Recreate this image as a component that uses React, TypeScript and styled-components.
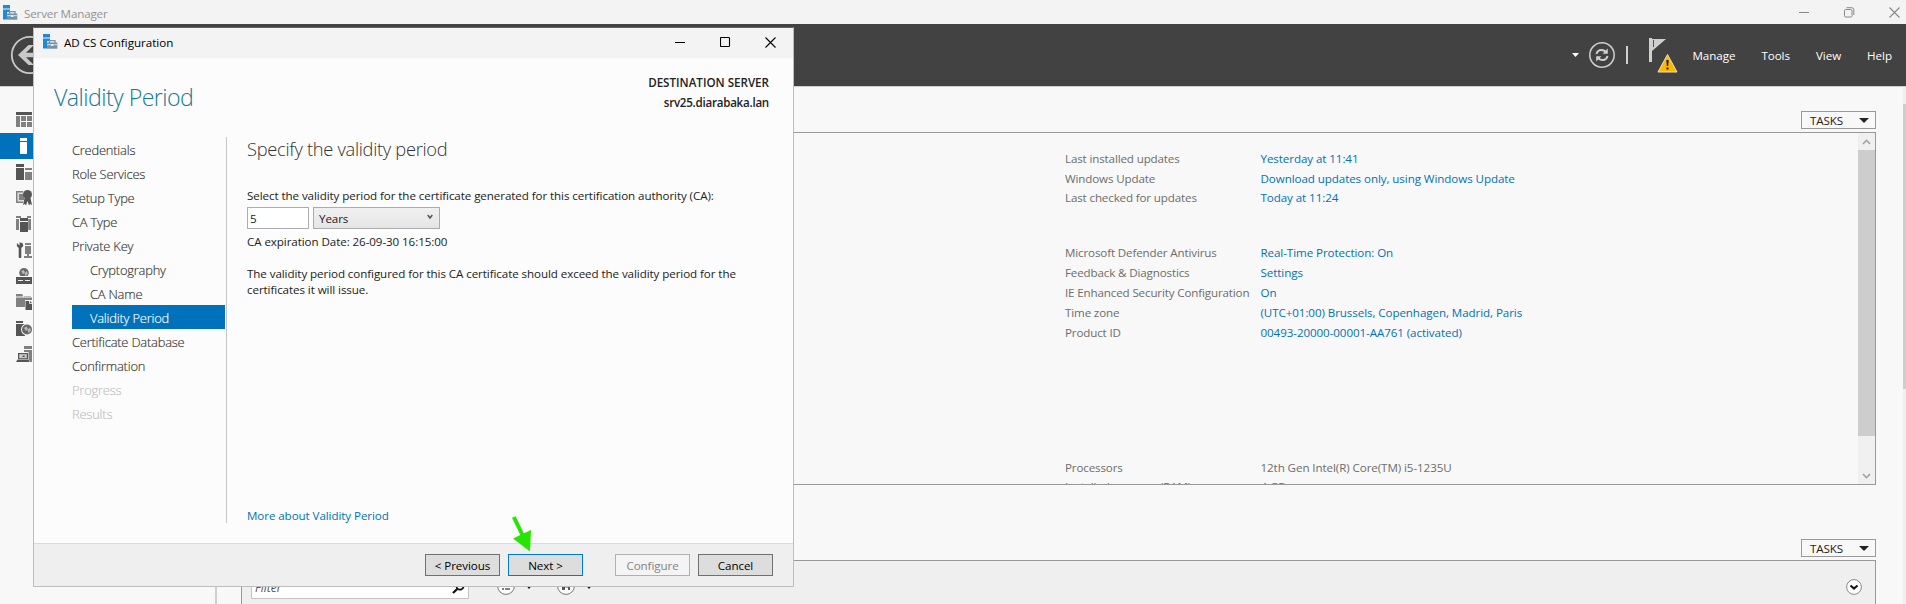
import React from 'react';
import styled, { createGlobalStyle, css } from 'styled-components';

const GlobalStyle = createGlobalStyle`
  * { box-sizing: border-box; }
  html, body { margin: 0; padding: 0; overflow: hidden; }
  body {
    font-family: "Open Sans", "Noto Sans", sans-serif;
    font-size: 11.6px;
    letter-spacing: -0.08px;
    line-height: 16px;
    color: #222;
  }
  svg { display: block; flex: none; }
`;

/* ---------- main window ---------- */

const Desktop = styled.div`
  position: relative;
  display: flex;
  flex-direction: column;
  width: 1906px;
  height: 604px;
  overflow: hidden;
  background: #f8f8f8;
`;

const TitleBar = styled.header`
  display: flex;
  align-items: center;
  justify-content: space-between;
  height: 24px;
  padding: 1px 6px 0 3px;
  background: #f3f3f3;
  color: #929292;
`;

const TitleGroup = styled.div`
  display: flex;
  align-items: center;
  gap: 6px;
`;

const TitleText = styled.span`
  padding-top: 2px;
  letter-spacing: -0.15px;
`;

const Controls = styled.div`
  display: flex;
  align-items: center;
  gap: 34px;
`;

const Banner = styled.div`
  display: flex;
  align-items: center;
  justify-content: space-between;
  height: 63px;
  padding: 0 14px 1px 10px;
  background: #424242;
  border-bottom: 1px solid #cfcfcf;
`;

const BannerTools = styled.div`
  display: flex;
  align-items: center;
`;

const RefreshGroup = styled.div`
  display: flex;
  align-items: center;
  gap: 10px;
  margin-right: 20px;
`;

const BannerDivider = styled.span`
  width: 2px;
  height: 18px;
  margin-left: 1px;
  background: #cfcfcf;
`;

const MenuList = styled.nav`
  display: flex;
  gap: 26px;
  margin-left: 13px;
  padding-top: 2px;
  color: #fff;
  font-weight: 500;
  letter-spacing: -0.05px;
`;

const WindowBody = styled.div`
  display: flex;
  flex: 1;
  min-height: 0;
`;

const Sidebar = styled.aside`
  display: flex;
  flex-direction: column;
  width: 217px;
  padding-top: 20px;
  border-right: 2px solid #cfcfcf;
`;

const SidebarItem = styled.div<{ $active?: boolean }>`
  display: flex;
  align-items: center;
  height: 26px;
  padding-left: 16px;
  background: ${p => (p.$active ? '#0072bc' : 'transparent')};
`;

const Main = styled.main`
  display: flex;
  flex: 1;
  flex-direction: column;
  min-width: 0;
  padding: 24px 27px 0 24px;
`;

const PageScroll = styled.div`
  width: 3px;
  padding-top: 17px;
  background: #efefef;
`;

const PageThumb = styled.div`
  height: 285px;
  background: #cdcdcd;
`;

const TasksButton = styled.div`
  display: flex;
  align-items: center;
  align-self: flex-end;
  justify-content: space-between;
  flex: none;
  width: 75px;
  height: 18px;
  margin-bottom: 3px;
  padding: 1px 6px 0 8px;
  border: 1px solid #999;
  color: #222;
`;

const PropertiesPanel = styled.section`
  display: flex;
  flex: none;
  justify-content: space-between;
  height: 353px;
  margin-bottom: 54px;
  border: 1px solid #999;
  overflow: hidden;
`;

const PropertyGroups = styled.div`
  padding: 16px 0 0 823px;
`;

const PropertyGroup = styled.dl<{ $before?: number; $pitch?: number }>`
  display: grid;
  grid-template-columns: 195.5px auto;
  grid-auto-rows: ${p => p.$pitch ?? 20}px;
  margin: ${p => p.$before ?? 0}px 0 0;
  line-height: 20px;
  white-space: nowrap;
`;

const PropertyName = styled.dt`
  color: #6d6d6d;
  letter-spacing: -0.14px;
`;

const PropertyValue = styled.dd<{ $plain?: boolean }>`
  margin: 0;
  color: ${p => (p.$plain ? '#6d6d6d' : '#0071bc')};
`;

const PanelScroll = styled.div`
  display: flex;
  flex-direction: column;
  align-items: center;
  width: 17px;
  background: #f0f0f0;
`;

const ScrollArrow = styled.div`
  display: flex;
  align-items: center;
  justify-content: center;
  height: 17px;
`;

const ScrollThumb = styled.div`
  width: 17px;
  height: 286px;
  margin-bottom: 31px;
  background: #cdcdcd;
`;

const EventsPanel = styled.section`
  display: flex;
  flex: 1;
  justify-content: space-between;
  padding: 12px 13px 0 9px;
  background: #efefef;
  border: 1px solid #999;
  border-bottom: 0;
`;

const EventTools = styled.div`
  display: flex;
  align-items: center;
  height: 26px;
`;

const FilterBox = styled.div`
  display: flex;
  align-items: center;
  justify-content: space-between;
  width: 218px;
  height: 26px;
  margin-right: 28px;
  padding: 3px 3px 0 3px;
  background: #fff;
  border: 1px solid #c4c4c4;
  color: #555;
  font-style: italic;
  font-size: 12px;
  letter-spacing: 0;
`;

const FilterChoice = styled.div`
  display: flex;
  align-items: center;
  gap: 10px;
  margin-right: 24px;
`;

const Expander = styled.div`
  display: flex;
  align-items: center;
  height: 28px;
`;

/* ---------- dialog ---------- */

const Dialog = styled.div`
  position: absolute;
  left: 33px;
  top: 27px;
  display: flex;
  flex-direction: column;
  width: 761px;
  height: 560px;
  background: #fcfcfc;
  border: 1px solid #bdbdbd;
  border-top-color: #606060;
`;

const DialogTitle = styled.header`
  display: flex;
  flex: none;
  align-items: center;
  justify-content: space-between;
  height: 30px;
  padding: 0 17px 2px 9px;
  background: #f3f3f3;
  color: #000;
`;

const DialogName = styled.span`
  padding-top: 1px;
  letter-spacing: 0;
`;

const PageHeader = styled.div`
  display: flex;
  flex: none;
  justify-content: space-between;
  height: 79px;
  padding: 15px 24px 0 20px;
`;

const PageTitle = styled.h1`
  margin: 7px 0 0;
  color: #137a9c;
  font-size: 23.2px;
  font-weight: 300;
  letter-spacing: -0.55px;
  line-height: 34px;
`;

const Destination = styled.div`
  text-align: right;
  font-weight: 600;
  line-height: 20px;
`;

const DestinationLabel = styled.div`
  letter-spacing: 0;
`;

const DestinationHost = styled.div`
  letter-spacing: -0.25px;
`;

const PageBody = styled.div`
  display: flex;
  height: 386px;
`;

const Steps = styled.ol`
  width: 193px;
  margin: 0;
  padding: 0 1px 0 38px;
  border-right: 1px solid #c6c6c6;
  list-style: none;
`;

const Step = styled.li<{ $state?: string; $nested?: boolean }>`
  height: 24px;
  padding: 3px 0 0 ${p => (p.$nested ? 18 : 0)}px;
  color: #333;
  font-size: 12.9px;
  font-weight: 300;
  letter-spacing: -0.2px;
  line-height: 21px;
  -webkit-text-stroke: 0.15px currentColor;
  ${p => p.$state === 'active' && css`
    background: #0072bc;
    color: #fff;
  `}
  ${p => p.$state === 'disabled' && css`
    color: #c0c0c0;
  `}
`;

const Content = styled.div`
  display: flex;
  flex: 1;
  flex-direction: column;
  padding-left: 20px;
`;

const Heading = styled.h2`
  margin: 0 0 27px;
  color: #333;
  font-size: 18.3px;
  font-weight: 300;
  letter-spacing: -0.3px;
  line-height: 24px;
`;

const FieldRow = styled.div`
  display: flex;
  gap: 4px;
  margin: 3px 0 5px;
`;

const NumberField = styled.div`
  width: 62px;
  height: 22px;
  padding: 3px 0 0 2px;
  background: #fff;
  border: 1px solid #abadb3;
`;

const UnitSelect = styled.div`
  display: flex;
  justify-content: space-between;
  width: 127px;
  height: 22px;
  padding: 3px 6px 0 5px;
  background: linear-gradient(#f0f0f0, #e5e5e5);
  border: 1px solid #acacac;
`;

const SelectArrow = styled.svg`
  margin-top: 3px;
`;

const Note = styled.p`
  width: 500px;
  margin: 16px 0 0;
`;

const HelpLink = styled.a`
  margin-top: auto;
  line-height: 14px;
  color: #0071bc;
`;

const DialogFooter = styled.footer`
  display: flex;
  gap: 8px;
  justify-content: flex-end;
  flex: none;
  height: 43px;
  margin-top: auto;
  padding: 10px 20px 0 0;
  background: #efefef;
  border-top: 1px solid #dadada;
`;

const Button = styled.button<{ $kind?: string }>`
  width: 75px;
  height: 22px;
  margin: 0;
  padding: 1px 0 0;
  background: #ddd;
  border: 1px solid #707070;
  color: #000;
  font: inherit;
  letter-spacing: inherit;
  ${p => p.$kind === 'default' && css`
    border-color: #0078d7;
  `}
  ${p => p.$kind === 'disabled' && css`
    margin-left: 24px;
    background: #f4f4f4;
    border-color: #adb2b5;
    color: #838383;
  `}
`;

const Pointer = styled.svg`
  position: absolute;
  left: 510px;
  top: 514px;
`;

/* ---------- drawings ---------- */

const AppIcon = () => (
  <svg width="15" height="16" viewBox="0 0 15 16">
    <path d="M0 0h7v3.500H0zM0 4.500h7V7H4v7.500H0z" fill="#1e88dc" />
    <path d="M6.500 9V6.700h5.500V9" fill="none" stroke="#7793a8" strokeWidth="1.300" />
    <path d="M4 8.500h10.300v6.200H4z" fill="#7391a6" />
    <path d="M4 10.700h10.300" stroke="#dfe8ee" strokeWidth=".9" />
    <path d="M8 10h2.500v2H8z" fill="#dfe8ee" />
  </svg>
);

const BackIcon = () => (
  <svg width="40" height="40" viewBox="0 0 40 40">
    <circle cx="20" cy="20" r="18.200" fill="none" stroke="#c9c9c9" strokeWidth="1.800" />
    <path d="M8 20L18.500 10h5.500l-8 7.700H32v4.600H16l8 7.700h-5.500z" fill="#c9c9c9" />
  </svg>
);

const Caret = ({ w = 10, h = 5, color = '#222' }: { w?: number; h?: number; color?: string }) => (
  <svg width={w} height={h} viewBox="0 0 10 5" preserveAspectRatio="none">
    <path d="M0 0h10L5 5z" fill={color} />
  </svg>
);

const RefreshIcon = () => (
  <svg width="26" height="26" viewBox="0 0 26 26" fill="none" stroke="#cfcfcf">
    <circle cx="13" cy="13" r="12.200" strokeWidth="1.500" />
    <path d="M7.500 12c.6-2.700 2.600-4 5-4 1.800 0 3 .6 4.200 1.800M18.500 14c-.6 2.700-2.600 4-5 4-1.800 0-3-.6-4.200-1.800" strokeWidth="2" />
    <path d="M18.800 6.500v5.200h-5.300zM7.200 19.500v-5.200h5.300z" fill="#cfcfcf" stroke="none" />
  </svg>
);

const FlagIcon = () => (
  <svg width="31" height="36" viewBox="0 0 31 36">
    <path d="M1 1h3v24H1z" fill="#cfcfcf" />
    <path d="M4 2h14L4 14z" fill="#cfcfcf" />
    <path d="M5.500 3v7" stroke="#555" />
    <path d="M19.500 17.500L29 35H10z" fill="#fdb900" stroke="#f3e2b0" strokeWidth="1" strokeLinejoin="round" />
    <path d="M18.300 23h2.400l-.5 6h-1.400zM18.500 30.500h2v2h-2z" fill="#222" />
  </svg>
);

const Minimize = ({ color }: { color: string }) => (
  <svg width="11" height="11" viewBox="0 0 11 11"><path d="M0 5.500h10" stroke={color} /></svg>
);
const Maximize = ({ color }: { color: string }) => (
  <svg width="11" height="11" viewBox="0 0 11 11"><rect x=".5" y=".5" width="9" height="9" rx=".8" fill="none" stroke={color} strokeWidth="1.100" /></svg>
);
const Restore = ({ color }: { color: string }) => (
  <svg width="11" height="11" viewBox="0 0 11 11" fill="none" stroke={color}>
    <rect x=".5" y="2.500" width="7.500" height="7.500" rx="1.200" />
    <path d="M2.500 .7h5.300a2 2 0 0 1 2 2V8" />
  </svg>
);
const Close = ({ color }: { color: string }) => (
  <svg width="11" height="11" viewBox="0 0 11 11"><path d="M.5 .5l10 10M10.500 .5l-10 10" stroke={color} strokeWidth="1.100" /></svg>
);

const Chevron = ({ up }: { up?: boolean }) => (
  <svg width="9" height="6" viewBox="0 0 9 6">
    <path d={up ? 'M1 5l3.500-3.700L8 5' : 'M1 1l3.500 3.700L8 1'} fill="none" stroke="#a0a0a0" strokeWidth="1.600" />
  </svg>
);

const D = '#555';
const M = '#808080';
const Glyph = ({ children }: { children: React.ReactNode }) => (
  <svg width="16" height="16" viewBox="0 0 16 16">{children}</svg>
);
const Globe = ({ x, y, r }: { x: number; y: number; r: number }) => (
  <>
    <circle cx={x} cy={y} r={r} fill="#686868" />
    <path d={`M${x - r * 0.6} ${y - r * 0.3}l${r * 0.5} ${-r * 0.3} ${r * 0.3} ${r * 0.5} ${-r * 0.4} ${r * 0.4}zM${x + r * 0.1} ${y + r * 0.1}l${r * 0.5} ${-r * 0.5} ${r * 0.2} ${r * 0.6} ${-r * 0.5} ${r * 0.5}z`} fill="#b8b8b8" />
  </>
);

const sideIcons: React.ReactNode[] = [
  <Glyph><path d="M0 0h16v3H0z" fill={D} /><path d="M0 4h4v11H0zM5 4h5v5H5zM11 4h5v5h-5zM5 10h5v5H5zM11 10h5v5h-5z" fill={M} /></Glyph>,
  <Glyph><path d="M4 0h7v3H4zM4 4h7v12H4z" fill="#fff" /></Glyph>,
  <Glyph><path d="M0 0h8v3H0zM0 4h8v12H0z" fill={D} /><path d="M9 4h7v2H9zM9 8h7v8H9z" fill={M} /></Glyph>,
  <Glyph>
    <path d="M0 1h7v12H0z" fill={M} /><path d="M1.500 2.500h6v9h-6z" fill="#ddd" /><path d="M3 4h5v6H3z" fill={M} />
    <circle cx="11.500" cy="4.500" r="4.500" fill={D} /><path d="M8.500 8h6l1.500 7-2-1-1 1.500L11.500 11 10 15.500 9 14l-2 1z" fill={D} />
  </Glyph>,
  <Glyph>
    <path d="M0 0h5v2H0zM11 0h4v2h-4zM0 3h2v11H0zM13 3h2v11h-2z" fill={M} /><path d="M4 2h8v3H4zM4 6h8v10H4z" fill={D} />
    <path d="M2.500 3v11M12.700 3v11" stroke={M} />
  </Glyph>,
  <Glyph>
    <path d="M1 1l2.500 2.500V0.500L6.500 1l.8 3-2 2v9a1.300 1.300 0 0 1-2.600 0V6L.8 4z" fill={D} />
    <path d="M9 1h6v2H9zM9 4h6v8H9zM11 12h2v2h-2zM8 14h8v2H8z" fill={M} />
  </Glyph>,
  <Glyph>
    <Globe x={8} y={4.800} r={4.800} /><path d="M0 9h16v7H0z" fill={D} /><path d="M2 12h5v1H2zM9 12h5v1H9z" fill="#eee" /><path d="M0 8.500h16" stroke="#f8f8f8" />
  </Glyph>,
  <Glyph>
    <path d="M0 0h6l1 1.500v1H0zM0 3.500h16V6H9v7H0zM8 2.500h7V3H8z" fill={M} /><path d="M9.500 7h4.500l2 2v7H9.500z" fill={D} /><path d="M13.500 7v2.500H16" fill="none" stroke="#ddd" />
  </Glyph>,
  <Glyph>
    <path d="M0 1h7v2H0zM0 4h9v12H0z" fill={D} /><circle cx="11" cy="9.500" r="6" fill="#f8f8f8" /><Globe x={11} y={9.500} r={5} />
  </Glyph>,
  <Glyph>
    <path d="M8 0h8v3H8zM12 4h4v12h-2l-1.500-3V6H8V4z" fill={M} /><path d="M2 7h10v6H2z" fill={D} /><path d="M3.200 8.200h7.600v4H3.200z" fill="#ccc" /><path d="M6 11l2-2 1 2z" fill={D} /><path d="M1.500 13.500h11L13.500 16H0z" fill={D} />
  </Glyph>,
];

const SearchIcon = () => (
  <svg width="13" height="13" viewBox="0 0 13 13" fill="none" stroke="#111">
    <circle cx="8" cy="5" r="3.600" strokeWidth="1.700" /><path d="M5.200 8L1 12" strokeWidth="2.300" />
  </svg>
);
const ListCircle = () => (
  <svg width="18" height="18" viewBox="0 0 18 18">
    <circle cx="9" cy="9" r="8.400" fill="#fcfcfc" stroke="#777" />
    <path d="M5 6h2M5 9h2M5 12h2M8 6h5M8 9h5M8 12h5" stroke="#555" strokeWidth="1.500" />
  </svg>
);
const SaveCircle = () => (
  <svg width="18" height="18" viewBox="0 0 18 18">
    <circle cx="9" cy="9" r="8.400" fill="#fcfcfc" stroke="#777" />
    <path d="M5 5h8v8h-2v-2.500H8V13H5z" fill="#555" /><path d="M6.500 5h5v3h-5z" fill="#ddd" />
  </svg>
);
const ExpandCircle = () => (
  <svg width="16" height="16" viewBox="0 0 16 16" fill="none">
    <circle cx="8" cy="8" r="7.400" fill="#fff" stroke="#888" />
    <path d="M4.500 6.500L8 9.600l3.500-3.100" stroke="#111" strokeWidth="2" />
  </svg>
);

/* ---------- data ---------- */

const steps: { label: string; nested?: boolean; state?: string }[] = [
  { label: 'Credentials' },
  { label: 'Role Services' },
  { label: 'Setup Type' },
  { label: 'CA Type' },
  { label: 'Private Key' },
  { label: 'Cryptography', nested: true },
  { label: 'CA Name', nested: true },
  { label: 'Validity Period', nested: true, state: 'active' },
  { label: 'Certificate Database' },
  { label: 'Confirmation' },
  { label: 'Progress', state: 'disabled' },
  { label: 'Results', state: 'disabled' },
];

const groups: { before?: number; pitch?: number; plain?: boolean; rows: [string, string][] }[] = [
  {
    pitch: 19.5,
    rows: [
      ['Last installed updates', 'Yesterday at 11:41'],
      ['Windows Update', 'Download updates only, using Windows Update'],
      ['Last checked for updates', 'Today at 11:24'],
    ],
  },
  {
    before: 35.5,
    rows: [
      ['Microsoft Defender Antivirus', 'Real-Time Protection: On'],
      ['Feedback & Diagnostics', 'Settings'],
      ['IE Enhanced Security Configuration', 'On'],
      ['Time zone', '(UTC+01:00) Brussels, Copenhagen, Madrid, Paris'],
      ['Product ID', '00493-20000-00001-AA761 (activated)'],
    ],
  },
  {
    before: 115,
    pitch: 19,
    plain: true,
    rows: [
      ['Processors', '12th Gen Intel(R) Core(TM) i5-1235U'],
      ['Installed memory (RAM)', '4 GB'],
    ],
  },
];

const Tasks = () => (
  <TasksButton>
    TASKS
    <Caret />
  </TasksButton>
);

const ConfigurationDialog = () => (
  <Dialog>
    <DialogTitle>
      <TitleGroup>
        <AppIcon />
        <DialogName>AD CS Configuration</DialogName>
      </TitleGroup>
      <Controls>
        <Minimize color="#000" />
        <Maximize color="#000" />
        <Close color="#000" />
      </Controls>
    </DialogTitle>
    <PageHeader>
      <PageTitle>Validity Period</PageTitle>
      <Destination>
        <DestinationLabel>DESTINATION SERVER</DestinationLabel>
        <DestinationHost>srv25.diarabaka.lan</DestinationHost>
      </Destination>
    </PageHeader>
    <PageBody>
      <Steps>
        {steps.map(s => (
          <Step key={s.label} $nested={s.nested} $state={s.state}>{s.label}</Step>
        ))}
      </Steps>
      <Content>
        <Heading>Specify the validity period</Heading>
        <div>Select the validity period for the certificate generated for this certification authority (CA):</div>
        <FieldRow>
          <NumberField>5</NumberField>
          <UnitSelect>
            Years
            <SelectArrow width="6" height="6" viewBox="0 0 6 6">
              <path d="M.7 1L3 4 5.300 1" fill="none" stroke="#555" strokeWidth="1.500" />
            </SelectArrow>
          </UnitSelect>
        </FieldRow>
        <div>CA expiration Date: 26-09-30 16:15:00</div>
        <Note>
          The validity period configured for this CA certificate should exceed the validity period for the
          certificates it will issue.
        </Note>
        <HelpLink>More about Validity Period</HelpLink>
      </Content>
    </PageBody>
    <DialogFooter>
      <Button>&lt; Previous</Button>
      <Button $kind="default">Next &gt;</Button>
      <Button $kind="disabled">Configure</Button>
      <Button>Cancel</Button>
    </DialogFooter>
  </Dialog>
);

export default function App() {
  return (
    <Desktop>
      <GlobalStyle />
      <TitleBar>
        <TitleGroup>
          <AppIcon />
          <TitleText>Server Manager</TitleText>
        </TitleGroup>
        <Controls>
          <Minimize color="#888" />
          <Restore color="#888" />
          <Close color="#888" />
        </Controls>
      </TitleBar>
      <Banner>
        <BackIcon />
        <BannerTools>
          <RefreshGroup>
            <Caret w={7} h={4} color="#fff" />
            <RefreshIcon />
            <BannerDivider />
          </RefreshGroup>
          <FlagIcon />
          <MenuList>
            <span>Manage</span>
            <span>Tools</span>
            <span>View</span>
            <span>Help</span>
          </MenuList>
        </BannerTools>
      </Banner>
      <WindowBody>
        <Sidebar>
          {sideIcons.map((icon, i) => (
            <SidebarItem key={i} $active={i === 1}>{icon}</SidebarItem>
          ))}
        </Sidebar>
        <Main>
          <Tasks />
          <PropertiesPanel>
            <PropertyGroups>
              {groups.map((g, i) => (
                <PropertyGroup key={i} $before={g.before} $pitch={g.pitch}>
                  {g.rows.map(([name, value]) => (
                    <React.Fragment key={name}>
                      <PropertyName>{name}</PropertyName>
                      <PropertyValue $plain={g.plain}>{value}</PropertyValue>
                    </React.Fragment>
                  ))}
                </PropertyGroup>
              ))}
            </PropertyGroups>
            <PanelScroll>
              <ScrollArrow><Chevron up /></ScrollArrow>
              <ScrollThumb />
              <ScrollArrow><Chevron /></ScrollArrow>
            </PanelScroll>
          </PropertiesPanel>
          <Tasks />
          <EventsPanel>
            <EventTools>
              <FilterBox>
                Filter
                <SearchIcon />
              </FilterBox>
              <FilterChoice>
                <ListCircle />
                <Caret w={8} h={5} color="#111" />
              </FilterChoice>
              <FilterChoice>
                <SaveCircle />
                <Caret w={8} h={5} color="#111" />
              </FilterChoice>
            </EventTools>
            <Expander><ExpandCircle /></Expander>
          </EventsPanel>
        </Main>
        <PageScroll><PageThumb /></PageScroll>
      </WindowBody>
      <ConfigurationDialog />
      <Pointer width="24" height="40" viewBox="0 0 24 40">
        <path d="M3.800 3L12.500 21" stroke="#26e600" strokeWidth="4" />
        <path d="M3 24.500L21 16l-1 21.500z" fill="#26e600" />
      </Pointer>
    </Desktop>
  );
}
